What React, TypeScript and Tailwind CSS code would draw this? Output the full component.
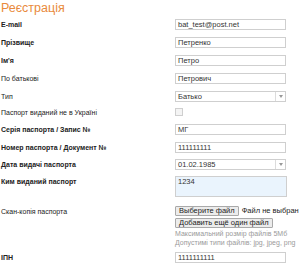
const font = { fontFamily: '"Liberation Sans", Arial, sans-serif' };

const Label = ({ text, bold }: { text: string; bold?: boolean }) => (
  <div className={`w-[175px] shrink-0 pl-[1px] text-[7px] leading-[11px] text-[#222] ${bold ? "font-bold" : ""}`}>{text}</div>
);

const Input = ({ value }: { value: string }) => (
  <div className="h-[11px] w-[111px] border border-[#cfcfcf] bg-white px-[2px] text-[7.5px] leading-[9px] text-[#333]">{value}</div>
);

const Select = ({ value }: { value: string }) => (
  <div className="flex h-[11px] w-[111px] border border-[#cfcfcf] bg-white text-[7.5px] leading-[9px] text-[#333]">
    <div className="flex-1 px-[2px]">{value}</div>
    <div className="flex w-[10px] items-center justify-center border-l border-[#dcdcdc]">
      <svg width="4" height="3" viewBox="0 0 4 3">
        <path d="M0 0h4L2 3z" fill="#999" />
      </svg>
    </div>
  </div>
);

const App = () => {
  return (
    <div className="h-[263px] w-[300px] overflow-hidden bg-white" style={font}>
      <div className="h-[18px] pl-[1px] pt-[1px] text-[12.5px] leading-[14px] text-[#e98a3c]">Реєстрація</div>
      <div className="flex h-[18px] items-start pt-[1px]">
        <Label text="E-mail" bold />
        <Input value="bat_test@post.net" />
      </div>
      <div className="flex h-[18px] items-start pt-[1px]">
        <Label text="Прізвище" bold />
        <Input value="Петренко" />
      </div>
      <div className="flex h-[18px] items-start pt-[1px]">
        <Label text="Ім'я" bold />
        <Input value="Петро" />
      </div>
      <div className="flex h-[18px] items-start pt-[1px]">
        <Label text="По батькові" />
        <Input value="Петрович" />
      </div>
      <div className="flex h-[16px] items-start pt-[1px]">
        <Label text="Тип" />
        <Select value="Батько" />
      </div>
      <div className="flex h-[17px] items-start pt-[1px]">
        <Label text="Паспорт виданий не в Україні" />
        <div className="mt-[1px] h-[8px] w-[8px] border border-[#cfcfcf] bg-[#f4f4f4]" />
      </div>
      <div className="flex h-[18px] items-start pt-[1px]">
        <Label text="Серія паспорта / Запис №" bold />
        <Input value="МГ" />
      </div>
      <div className="flex h-[17px] items-start pt-[1px]">
        <Label text="Номер паспорта / Документ №" bold />
        <Input value="111111111" />
      </div>
      <div className="flex h-[17px] items-start pt-[1px]">
        <Label text="Дата видачі паспорта" bold />
        <Select value="01.02.1985" />
      </div>
      <div className="flex h-[29px] items-start pt-[1px]">
        <Label text="Ким виданий паспорт" bold />
        <div className="h-[21px] w-[112px] border border-[#cfcfcf] bg-[#eaf4fd] px-[2px] text-[7.5px] leading-[9px] text-[#333]">1234</div>
      </div>
      <div className="flex h-[48px] items-start pt-[2px]">
        <Label text="Скан-копія паспорта" />
        <div className="flex min-w-0 flex-col">
          <div className="flex items-center gap-[3px] whitespace-nowrap text-[7.5px]">
            <div className="h-[10px] shrink-0 rounded-[1px] border border-[#a9a9a9] bg-[#ececec] px-[3px] leading-[8px] text-[#222]">Выберите файл</div>
            <span className="shrink-0 leading-[10px] text-[#222]">Файл не выбран</span>
          </div>
          <div className="mt-[2px] h-[10px] w-fit whitespace-nowrap rounded-[1px] border border-[#a9a9a9] bg-[#ececec] px-[3px] text-[7.5px] leading-[8px] text-[#222]">Добавить ещё один файл</div>
          <div className="mt-[1px] whitespace-nowrap text-[7px] leading-[9px] text-[#9a9a9a]">Максимальний розмір файлів 5Мб</div>
          <div className="whitespace-nowrap text-[7px] leading-[9px] text-[#9a9a9a]">Допустимі типи файлів: jpg, jpeg, png</div>
        </div>
      </div>
      <div className="flex h-[11px] items-start">
        <Label text="ІПН" bold />
        <Input value="1111111111" />
      </div>
    </div>
  );
};

export default App;
